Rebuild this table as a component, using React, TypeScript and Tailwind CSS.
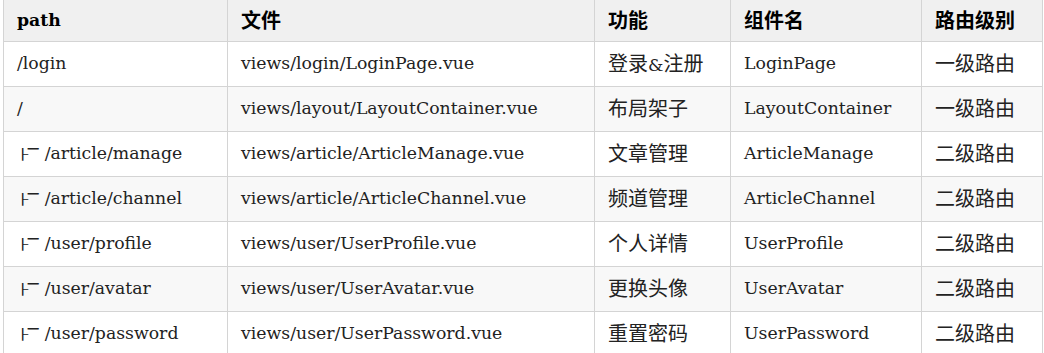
import React from "react";

const rows: string[][] = [
  ["/login", "views/login/LoginPage.vue", "登录&注册", "LoginPage", "一级路由"],
  ["/", "views/layout/LayoutContainer.vue", "布局架子", "LayoutContainer", "一级路由"],
  ["├─ /article/manage", "views/article/ArticleManage.vue", "文章管理", "ArticleManage", "二级路由"],
  ["├─ /article/channel", "views/article/ArticleChannel.vue", "频道管理", "ArticleChannel", "二级路由"],
  ["├─ /user/profile", "views/user/UserProfile.vue", "个人详情", "UserProfile", "二级路由"],
  ["├─ /user/avatar", "views/user/UserAvatar.vue", "更换头像", "UserAvatar", "二级路由"],
  ["├─ /user/password", "views/user/UserPassword.vue", "重置密码", "UserPassword", "二级路由"],
];

const widths = ["w-[224px]", "w-[367px]", "w-[136px]", "w-[191px]", "w-[121px]"];

function Rich({ text }: { text: string }) {
  if (text.startsWith("├─ ")) {
    return (
      <>
        <span
          className="inline-block text-[18px] scale-y-[0.6] align-middle"
          style={{ fontFamily: '"DejaVu Sans Mono", monospace' }}
        >
          ├
        </span>
        <span
          className="relative -top-[4px] text-[18px]"
          style={{ fontFamily: '"DejaVu Sans Mono", monospace' }}
        >
          ─
        </span>
        <span className="ml-[6px]">{text.slice(3)}</span>
      </>
    );
  }
  const parts = text.match(/[\u4e00-\u9fff]+|[^\u4e00-\u9fff]+/g) || [];
  return (
    <>
      {parts.map((p, i) =>
        /[\u4e00-\u9fff]/.test(p) ? (
          <span key={i} className="text-[20px]" style={{ fontFamily: '"Noto Sans CJK SC", sans-serif' }}>
            {p}
          </span>
        ) : (
          <span key={i}>{p}</span>
        )
      )}
    </>
  );
}

export default function App() {
  return (
    <div
      className="w-[1044px] h-[353px] overflow-hidden bg-white pl-[3px] text-[#222]"
      style={{ fontFamily: '"DejaVu Serif", "Noto Sans CJK SC", serif' }}
    >
      <table className="border-collapse text-[17.3px] leading-none">
        <thead>
          <tr className="bg-[#f0f0f0] h-[41px]">
            {["path", "文件", "功能", "组件名", "路由级别"].map((h, i) => (
              <th
                key={i}
                className={`${widths[i]} border border-t-0 border-[#d4d4d4] px-[13px] text-left font-bold text-black`}
              >
                <Rich text={h} />
              </th>
            ))}
          </tr>
        </thead>
        <tbody>
          {rows.map((r, ri) => (
            <tr key={ri} className={`h-[45px] ${ri % 2 === 1 ? "bg-[#f8f8f8]" : "bg-white"}`}>
              {r.map((c, ci) => (
                <td key={ci} className={`${widths[ci]} border border-[#d4d4d4] px-[13px] whitespace-nowrap`}>
                  <Rich text={c} />
                </td>
              ))}
            </tr>
          ))}
        </tbody>
      </table>
    </div>
  );
}
